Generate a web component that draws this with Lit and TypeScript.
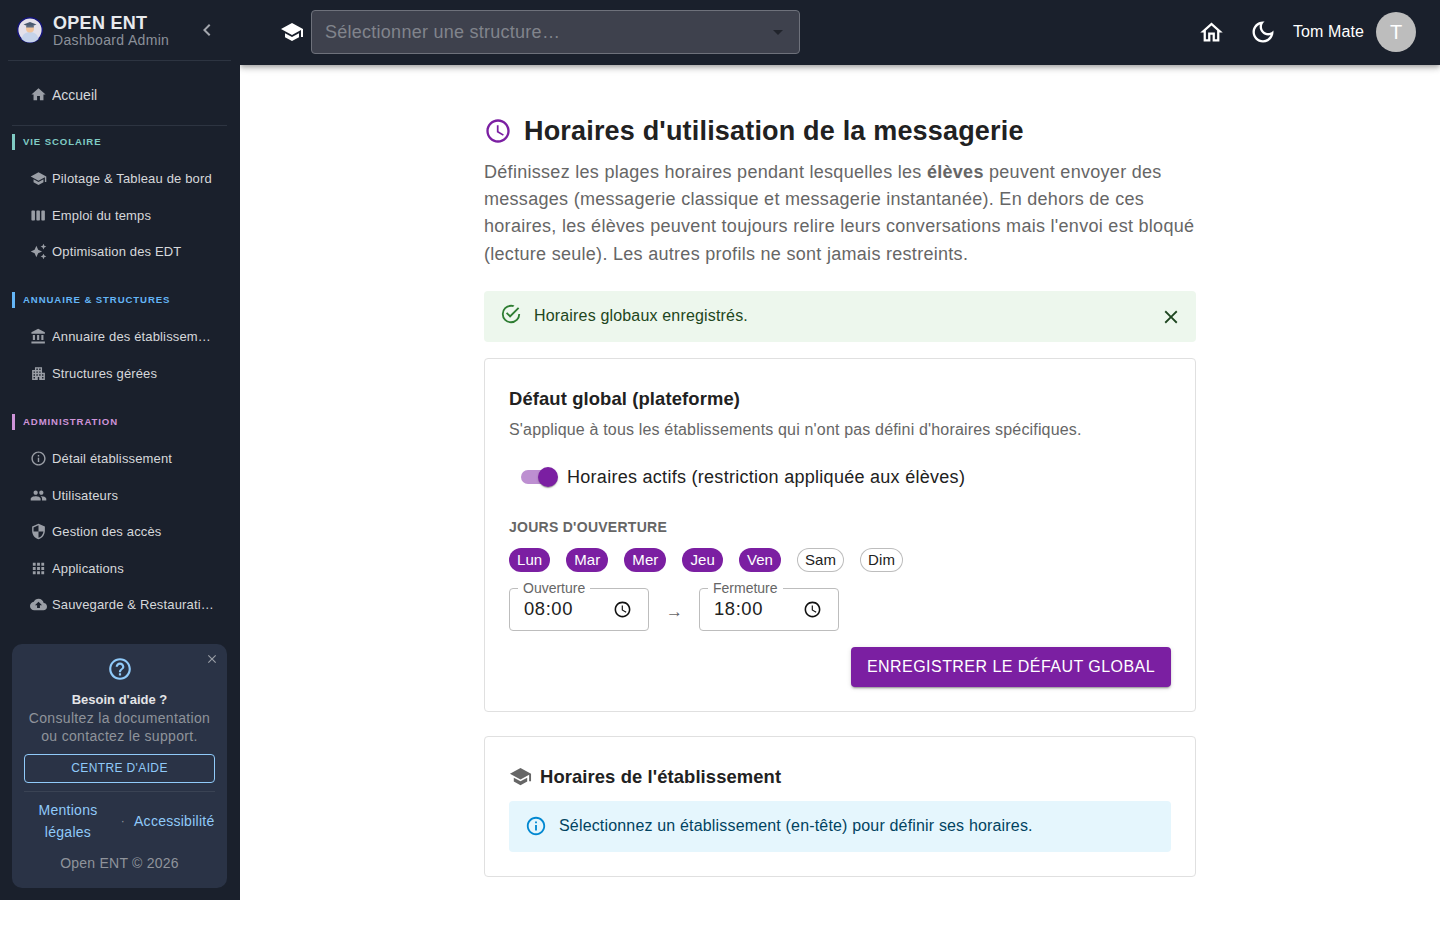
import { LitElement, html, css, svg } from 'lit';
import { customElement } from 'lit/decorators.js';

const P = {
  home: 'M10 20v-6h4v6h5v-8h3L12 3 2 12h3v8z',
  homeOut: 'M12 5.69l5 4.5V18h-2v-6H9v6H7v-7.81l5-4.5M12 3L2 12h3v8h6v-6h2v6h6v-8h3L12 3z',
  school: 'M5 13.18v4L12 21l7-3.82v-4L12 17l-7-3.82zM12 3 1 9l11 6 9-4.91V17h2V9L12 3z',
  week: 'M6 5H3c-.55 0-1 .45-1 1v12c0 .55.45 1 1 1h3c.55 0 1-.45 1-1V6c0-.55-.45-1-1-1zm14 0h-3c-.55 0-1 .45-1 1v12c0 .55.45 1 1 1h3c.55 0 1-.45 1-1V6c0-.55-.45-1-1-1zm-7 0h-3c-.55 0-1 .45-1 1v12c0 .55.45 1 1 1h3c.55 0 1-.45 1-1V6c0-.55-.45-1-1-1z',
  sparkle: 'M19 9l1.25-2.75L23 5l-2.75-1.25L19 1l-1.25 2.75L15 5l2.75 1.25L19 9zm-7.5.5L9 4 6.5 9.5 1 12l5.5 2.5L9 20l2.5-5.5L17 12l-5.5-2.5zM19 15l-1.25 2.75L15 19l2.75 1.25L19 23l1.25-2.75L23 19l-2.75-1.25L19 15z',
  bank: 'M4 10v7h3v-7H4zm6 0v7h3v-7h-3zM2 22h19v-3H2v3zm14-12v7h3v-7h-3zm-4.5-9L2 6v2h19V6l-9.5-5z',
  apartment: 'M17 11V3H7v4H3v14h8v-4h2v4h8V11h-4zM7 19H5v-2h2v2zm0-4H5v-2h2v2zm0-4H5V9h2v2zm4 4H9v-2h2v2zm0-4H9V9h2v2zm0-4H9V5h2v2zm4 8h-2v-2h2v2zm0-4h-2V9h2v2zm0-4h-2V5h2v2zm4 12h-2v-2h2v2zm0-4h-2v-2h2v2z',
  info: 'M11 7h2v2h-2zm0 4h2v6h-2zm1-9C6.48 2 2 6.48 2 12s4.48 10 10 10 10-4.48 10-10S17.52 2 12 2zm0 18c-4.41 0-8-3.59-8-8s3.59-8 8-8 8 3.59 8 8-3.59 8-8 8z',
  people: 'M16 11c1.66 0 2.99-1.34 2.99-3S17.66 5 16 5c-1.66 0-3 1.34-3 3s1.34 3 3 3zm-8 0c1.66 0 2.99-1.34 2.99-3S9.66 5 8 5C6.34 5 5 6.34 5 8s1.34 3 3 3zm0 2c-2.33 0-7 1.17-7 3.5V19h14v-2.5c0-2.33-4.67-3.5-7-3.5zm8 0c-.29 0-.62.02-.97.05 1.16.84 1.97 1.97 1.97 3.45V19h6v-2.5c0-2.33-4.67-3.5-7-3.5z',
  shield: 'M12 1L3 5v6c0 5.55 3.84 10.74 9 12 5.16-1.26 9-6.45 9-12V5l-9-4zm0 10.99h7c-.53 4.12-3.28 7.79-7 8.94V12H5V6.3l7-3.11v8.8z',
  apps: 'M4 8h4V4H4v4zm6 12h4v-4h-4v4zm-6 0h4v-4H4v4zm0-6h4v-4H4v4zm6 0h4v-4h-4v4zm6-10v4h4V4h-4zm-6 4h4V4h-4v4zm6 6h4v-4h-4v4zm0 6h4v-4h-4v4z',
  cloud: 'M19.35 10.04C18.67 6.59 15.64 4 12 4 9.11 4 6.6 5.64 5.35 8.04 2.34 8.36 0 10.91 0 14c0 3.31 2.69 6 6 6h13c2.76 0 5-2.24 5-5 0-2.64-2.05-4.78-4.65-4.96zM14 13v4h-4v-4H7l5-5 5 5h-3z',
  help: 'M11 18h2v-2h-2v2zm1-16C6.48 2 2 6.48 2 12s4.48 10 10 10 10-4.48 10-10S17.52 2 12 2zm0 18c-4.41 0-8-3.59-8-8s3.59-8 8-8 8 3.59 8 8-3.59 8-8 8zm0-14c-2.21 0-4 1.79-4 4h2c0-1.1.9-2 2-2s2 .9 2 2c0 2-3 1.75-3 5h2c0-2.25 3-2.5 3-5 0-2.21-1.79-4-4-4z',
  close: 'M19 6.41 17.59 5 12 10.59 6.41 5 5 6.41 10.59 12 5 17.59 6.41 19 12 13.41 17.59 19 19 17.59 13.41 12z',
  chevron: 'M15.41 7.41 14 6l-6 6 6 6 1.41-1.41L10.83 12z',
  clock: 'M11.99 2C6.47 2 2 6.48 2 12s4.47 10 9.99 10C17.52 22 22 17.52 22 12S17.52 2 11.99 2zM12 20c-4.42 0-8-3.58-8-8s3.58-8 8-8 8 3.58 8 8-3.58 8-8 8zm.5-13H11v6l5.25 3.15.75-1.23-4.5-2.67z',
  check: 'M20 12a8 8 0 0 1-8 8 8 8 0 0 1-8-8 8 8 0 0 1 8-8c.76 0 1.5.11 2.2.31l1.57-1.57A9.822 9.822 0 0 0 12 2 10 10 0 0 0 2 12a10 10 0 0 0 10 10 10 10 0 0 0 10-10M7.91 10.08 6.5 11.5 11 16 21 6l-1.41-1.42L11 13.17l-3.09-3.09z',
  moon: 'M9.37 5.51C9.19 6.15 9.1 6.82 9.1 7.5c0 4.08 3.32 7.4 7.4 7.4.68 0 1.35-.09 1.99-.27C17.45 17.19 14.93 19 12 19c-3.86 0-7-3.14-7-7 0-2.93 1.81-5.45 4.37-6.49zM12 3c-4.97 0-9 4.03-9 9s4.03 9 9 9 9-4.03 9-9c0-.46-.04-.92-.1-1.36-.98 1.37-2.58 2.26-4.4 2.26-2.98 0-5.4-2.42-5.4-5.4 0-1.81.89-3.42 2.26-4.4-.44-.06-.9-.1-1.36-.1z',
};

const icon = (d: string, size: number, color = 'currentColor') => html`
  <svg width=${size} height=${size} viewBox="0 0 24 24" fill=${color} style="flex:none;display:block">
    ${svg`<path d=${d}></path>`}
  </svg>
`;

const sections = [
  {
    label: 'Vie scolaire',
    color: '#80cbc4',
    items: [
      { icon: P.school, text: 'Pilotage & Tableau de bord' },
      { icon: P.week, text: 'Emploi du temps' },
      { icon: P.sparkle, text: 'Optimisation des EDT' },
    ],
  },
  {
    label: 'Annuaire & Structures',
    color: '#64b5f6',
    items: [
      { icon: P.bank, text: 'Annuaire des établissements' },
      { icon: P.apartment, text: 'Structures gérées' },
    ],
  },
  {
    label: 'Administration',
    color: '#ce93d8',
    items: [
      { icon: P.info, text: 'Détail établissement' },
      { icon: P.people, text: 'Utilisateurs' },
      { icon: P.shield, text: 'Gestion des accès' },
      { icon: P.apps, text: 'Applications' },
      { icon: P.cloud, text: 'Sauvegarde & Restauration' },
    ],
  },
];

const days = [
  { label: 'Lun', on: true },
  { label: 'Mar', on: true },
  { label: 'Mer', on: true },
  { label: 'Jeu', on: true },
  { label: 'Ven', on: true },
  { label: 'Sam', on: false },
  { label: 'Dim', on: false },
];

@customElement('app-root')
export class AppRoot extends LitElement {
  static styles = css`
    :host {
      display: block;
      font-family: 'Liberation Sans', Arial, sans-serif;
      color: #212121;
      background: #fff;
    }
    * { box-sizing: border-box; }

    .layout { display: flex; align-items: flex-start; }

    /* sidebar */
    .sidebar {
      width: 240px;
      height: 900px;
      flex: none;
      background: #1a202c;
      display: flex;
      flex-direction: column;
      position: relative;
      z-index: 2;
    }
    .brand {
      height: 61px;
      margin: 0 9px 0 8px;
      padding: 0 0 0 9px;
      display: flex;
      align-items: center;
      border-bottom: 1px solid #2d3441;
      flex: none;
    }
    .logo { width: 26px; height: 26px; margin-right: 10px; flex: none; }
    .brand-text { flex: 1; }
    .brand-title { font-size: 18px; font-weight: 700; line-height: 18px; letter-spacing: 0.3px; color: #e8eaed; margin-top: 1px; }
    .brand-sub { font-size: 14px; line-height: 16px; letter-spacing: 0.33px; color: #8b909a; }
    .collapse { color: #a3a6ad; margin-right: 12px; display: block; }
    .nav { flex: 1; min-height: 0; padding: 15px 13px 0 12px; }
    .item {
      height: 36.6px;
      display: flex;
      align-items: center;
      padding-left: 18px;
      font-size: 13px;
      letter-spacing: 0.15px;
      color: #d6d8db;
    }
    .item svg { margin-right: 5px; color: #9a9ea6; }
    .item span { white-space: nowrap; overflow: hidden; text-overflow: ellipsis; width: 162px; }
    .item.top { font-size: 14px; height: 37px; letter-spacing: 0; }
    .rule { height: 1px; background: #2d3441; margin-top: 12px; margin-bottom: 8px; }
    .section { margin-bottom: 22.3px; }
    .sec-label {
      height: 16px;
      margin-bottom: 10.2px;
      border-left: 3px solid;
      padding-left: 8px;
      font-size: 9.6px;
      font-weight: 700;
      line-height: 16px;
      letter-spacing: 0.9px;
      text-transform: uppercase;
    }
    .help {
      position: relative;
      margin: 0 13px 12px 12px;
      height: 244px;
      padding: 12px;
      border-radius: 10px;
      background: #2a3346;
      display: flex;
      flex-direction: column;
      align-items: center;
      text-align: center;
      flex: none;
    }
    .help-close { position: absolute; top: 8px; right: 8px; color: #9a9ea6; }
    .help-title { margin-top: 8.5px; font-size: 13px; line-height: 18px; font-weight: 700; color: #e4e5e8; }
    .help-text { font-size: 14px; line-height: 18px; color: #8f939b; letter-spacing: 0.33px; }
    .help-btn {
      width: 100%;
      height: 29px;
      margin-top: 9px;
      border: 1px solid #90caf9;
      border-radius: 4px;
      font-size: 12px;
      line-height: 27px;
      letter-spacing: 0.38px;
      color: #90caf9;
      flex: none;
    }
    .help-rule { width: 100%; height: 1px; background: #3a4354; margin-top: 8px; flex: none; }
    .help-links {
      width: 100%;
      height: 47px;
      margin-top: 6px;
      display: flex;
      align-items: center;
      font-size: 14px;
      line-height: 22px;
      letter-spacing: 0.27px;
      color: #90caf9;
    }
    .help-links .l1 { width: 88px; }
    .help-links .dot { width: 22px; color: #8f939b; font-size: 12px; }
    .help-links .l2 { white-space: nowrap; }
    .help-copy { margin-top: 9px; font-size: 14px; line-height: 18px; color: #8f939b; letter-spacing: 0.23px; }

    /* top bar + content */
    .right { flex: 1; min-width: 0; }
    .topbar {
      height: 65px;
      background: #1a202c;
      box-shadow: 0 2px 4px -1px rgba(0,0,0,.2), 0 4px 5px 0 rgba(0,0,0,.14), 0 1px 10px 0 rgba(0,0,0,.12);
      display: flex;
      align-items: center;
      padding: 0 24px 1px 40px;
      color: #fff;
    }
    .select {
      width: 489px;
      height: 44px;
      margin-left: 7px;
      padding: 0 16px 0 13px;
      display: flex;
      align-items: center;
      justify-content: space-between;
      background: #3e414d;
      border: 1px solid #6e717b;
      border-radius: 4px;
      font-size: 18px;
      letter-spacing: 0.26px;
      color: #81848c;
    }
    .caret { width: 0; height: 0; border: 5.5px solid transparent; border-top-color: #21242c; border-bottom: 0; }
    .spacer { flex: 1; }
    .topbar .home { margin-right: 23.5px; }
    .topbar .moon { margin-right: 16px; }
    .user { font-size: 16px; margin-right: 12px; letter-spacing: 0.1px; }
    .avatar {
      width: 40px;
      height: 40px;
      border-radius: 50%;
      background: #bdbdbd;
      color: #fff;
      font-size: 20px;
      display: flex;
      align-items: center;
      justify-content: center;
    }

    .content { width: 712px; margin: 0 auto; padding-top: 48px; }
    .title { display: flex; align-items: center; gap: 12px; height: 36px; margin-bottom: 9.55px; }
    .title h1 { margin: 0; font-size: 27px; font-weight: 700; line-height: 36px; letter-spacing: 0.18px; color: #212121; }
    .lead { margin: 0; font-size: 18px; line-height: 27.33px; color: #666; letter-spacing: 0.29px; }
    .lead b { font-weight: 700; }

    .alert {
      height: 51px;
      padding: 0 14px 0 16px;
      display: flex;
      align-items: center;
      border-radius: 4px;
      font-size: 16px;
      letter-spacing: 0.17px;
    }
    .alert.ok { margin-top: 22.73px; background: #edf7ed; color: #1e4620; }
    .alert.ok .tick { margin-top: -4px; }
    .alert.ok .dismiss { margin-top: 2px; }
    .alert.note { background: #e5f6fd; color: #014361; }
    .alert .msg { flex: 1; margin-left: 12px; }

    .card { border: 1px solid #e0e0e0; border-radius: 4px; padding: 24px; }
    .card.one { margin-top: 16px; height: 354px; }
    .card.two { margin-top: 24px; height: 141px; }
    .card h2 { margin: 0; font-size: 18.4px; line-height: 32px; font-weight: 700; letter-spacing: 0.12px; color: #212121; }
    .sub { margin-top: 3px; font-size: 16px; line-height: 24px; letter-spacing: 0.17px; color: #666; }
    .toggle { display: flex; align-items: center; margin-top: 17px; height: 38px; padding-left: 12px; font-size: 18px; letter-spacing: 0.28px; }
    .track { position: relative; width: 34px; height: 14px; margin-top: -1px; border-radius: 7px; background: #bd8fd1; margin-right: 12px; }
    .thumb {
      position: absolute;
      top: -3px;
      right: -3px;
      width: 20px;
      height: 20px;
      border-radius: 50%;
      background: #7b1fa2;
      box-shadow: 0 2px 1px -1px rgba(0,0,0,.2), 0 1px 1px rgba(0,0,0,.14), 0 1px 3px rgba(0,0,0,.12);
    }
    .days-label { margin-top: 22px; font-size: 14px; line-height: 16px; font-weight: 700; color: #666; letter-spacing: 0.27px; }
    .days { display: flex; gap: 16px; margin-top: 13px; }
    .chip {
      height: 24px;
      padding: 0 8px;
      border-radius: 12px;
      font-size: 15px;
      line-height: 24px;
      letter-spacing: 0.08px;
      color: #212121;
      box-shadow: inset 0 0 0 1px #bdbdbd;
    }
    .chip.on { background: #7b1fa2; color: #fff; box-shadow: none; }
    .times { display: flex; align-items: center; margin-top: 16px; }
    .field {
      position: relative;
      width: 140px;
      height: 43px;
      border: 1px solid #bdbdbd;
      border-radius: 4px;
      padding: 0 16px 0 14px;
      display: flex;
      align-items: center;
      justify-content: space-between;
      font-size: 18.4px;
      letter-spacing: 0.6px;
    }
    .field .legend {
      position: absolute;
      top: -8px;
      left: 8px;
      padding: 0 5px;
      background: #fff;
      font-size: 14px;
      line-height: 15px;
      letter-spacing: 0;
      color: #666;
    }
    .arrow { width: 50px; padding-left: 1px; text-align: center; color: #666; font-size: 17px; padding-top: 6px; }
    .actions { display: flex; justify-content: flex-end; margin-top: 16px; }
    .save {
      width: 320px;
      height: 40px;
      border-radius: 4px;
      background: #7b1fa2;
      color: #fff;
      font-size: 16px;
      line-height: 40px;
      letter-spacing: 0.46px;
      text-align: center;
      box-shadow: 0 3px 1px -2px rgba(0,0,0,.2), 0 2px 2px rgba(0,0,0,.14), 0 1px 5px rgba(0,0,0,.12);
    }
    .card-head { display: flex; align-items: center; gap: 8px; height: 32px; margin-top: 0; }
    .card-head h2 { letter-spacing: 0.1px; }
    .card.two .alert { margin-top: 8px; }
  `;

  private renderLogo() {
    return html`
      <svg class="logo" viewBox="0 0 26 26">
        <circle cx="13" cy="13" r="12.3" fill="#e4e1ea" stroke="#14147a" stroke-width="1.4"></circle>
        <path d="M4.5 22c1-5 4.5-7 8.5-7s7.5 2 8.5 7a12 12 0 0 1-17 0z" fill="#c5d3ea"></path>
        <circle cx="13" cy="11.5" r="4" fill="#f0c39d"></circle>
        <path d="M6.5 7.5 13 5l6.5 2.5L13 10z" fill="#4a5a70"></path>
        <path d="M9.2 8.5h7.6v2H9.2z" fill="#5b6b80"></path>
      </svg>
    `;
  }

  private renderSidebar() {
    return html`
      <aside class="sidebar">
        <div class="brand">
          ${this.renderLogo()}
          <div class="brand-text">
            <div class="brand-title">OPEN ENT</div>
            <div class="brand-sub">Dashboard Admin</div>
          </div>
          <span class="collapse">${icon(P.chevron, 24)}</span>
        </div>
        <nav class="nav">
          <div class="item top">${icon(P.home, 17)}<span>Accueil</span></div>
          <div class="rule"></div>
          ${sections.map(
            (s) => html`
              <div class="section">
                <div class="sec-label" style="border-color:${s.color};color:${s.color}">${s.label}</div>
                ${s.items.map((i) => html`<div class="item">${icon(i.icon, 17)}<span>${i.text}</span></div>`)}
              </div>
            `
          )}
        </nav>
        <div class="help">
          <span class="help-close">${icon(P.close, 14)}</span>
          ${icon(P.help, 26, '#90caf9')}
          <div class="help-title">Besoin d'aide ?</div>
          <div class="help-text">Consultez la documentation<br />ou contactez le support.</div>
          <div class="help-btn">CENTRE D'AIDE</div>
          <div class="help-rule"></div>
          <div class="help-links">
            <span class="l1">Mentions légales</span>
            <span class="dot">·</span>
            <span class="l2">Accessibilité</span>
          </div>
          <div class="help-copy">Open ENT © 2026</div>
        </div>
      </aside>
    `;
  }

  private renderTopbar() {
    return html`
      <header class="topbar">
        ${icon(P.school, 24)}
        <div class="select">
          <span>Sélectionner une structure…</span>
          <span class="caret"></span>
        </div>
        <span class="spacer"></span>
        <span class="home">${icon(P.homeOut, 27)}</span>
        <span class="moon">${icon(P.moon, 28)}</span>
        <span class="user">Tom Mate</span>
        <span class="avatar">T</span>
      </header>
    `;
  }

  private renderField(label: string, value: string) {
    return html`
      <div class="field">
        <span class="legend">${label}</span>
        <span>${value}</span>
        ${icon(P.clock, 19, '#111')}
      </div>
    `;
  }

  render() {
    return html`
      <div class="layout">
        ${this.renderSidebar()}
        <div class="right">
          ${this.renderTopbar()}
          <main class="content">
            <div class="title">
              ${icon(P.clock, 28, '#7b1fa2')}
              <h1>Horaires d'utilisation de la messagerie</h1>
            </div>
            <p class="lead">
              Définissez les plages horaires pendant lesquelles les <b>élèves</b> peuvent envoyer des
              messages (messagerie classique et messagerie instantanée). En dehors de ces horaires, les
              élèves peuvent toujours relire leurs conversations mais l'envoi est bloqué (lecture seule).
              Les autres profils ne sont jamais restreints.
            </p>

            <div class="alert ok">
              <span class="tick">${icon(P.check, 22, '#2e7d32')}</span>
              <span class="msg">Horaires globaux enregistrés.</span>
              <span class="dismiss">${icon(P.close, 22, '#1e4620')}</span>
            </div>

            <section class="card one">
              <h2>Défaut global (plateforme)</h2>
              <div class="sub">S'applique à tous les établissements qui n'ont pas défini d'horaires spécifiques.</div>
              <div class="toggle">
                <span class="track"><span class="thumb"></span></span>
                Horaires actifs (restriction appliquée aux élèves)
              </div>
              <div class="days-label">JOURS D'OUVERTURE</div>
              <div class="days">
                ${days.map((d) => html`<span class="chip ${d.on ? 'on' : ''}">${d.label}</span>`)}
              </div>
              <div class="times">
                ${this.renderField('Ouverture', '08:00')}
                <span class="arrow">→</span>
                ${this.renderField('Fermeture', '18:00')}
              </div>
              <div class="actions"><div class="save">ENREGISTRER LE DÉFAUT GLOBAL</div></div>
            </section>

            <section class="card two">
              <div class="card-head">
                ${icon(P.school, 23, '#666')}
                <h2>Horaires de l'établissement</h2>
              </div>
              <div class="alert note">
                ${icon(P.info, 22, '#0288d1')}
                <span class="msg">Sélectionnez un établissement (en-tête) pour définir ses horaires.</span>
              </div>
            </section>
          </main>
        </div>
      </div>
    `;
  }
}
